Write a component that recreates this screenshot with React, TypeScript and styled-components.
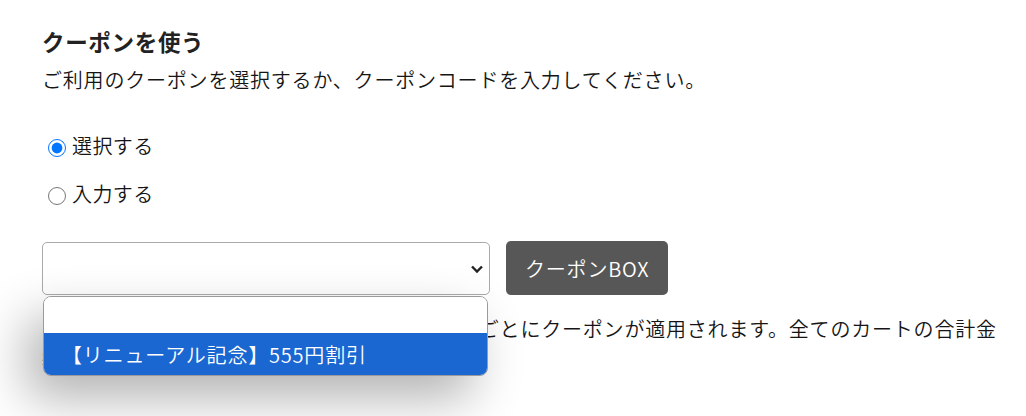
import React, { useState } from 'react';
import styled, { createGlobalStyle } from 'styled-components';

const GlobalStyle = createGlobalStyle`
  body {
    margin: 0;
    background: #fff;
    color: #151515;
    font-family: "Noto Sans CJK JP", "Noto Sans", sans-serif;
    font-weight: 350;
  }
`;

const Page = styled.div`
  padding: 24px 26px 0 42px;
  height: 416px;
  box-sizing: border-box;
  overflow: hidden;
`;

const Title = styled.h2`
  margin: 0;
  font-size: 22.5px;
  font-weight: 700;
  line-height: 34px;
  letter-spacing: 0.03em;
  color: #222;
`;

const Lead = styled.p`
  margin: 6px 0 0;
  font-size: 20px;
  line-height: 32px;
  letter-spacing: 0.04em;
`;

const RadioGroup = styled.div`
  display: flex;
  flex-direction: column;
  gap: 14px;
  margin: 33px 0 0 6px;
`;

const RadioLabel = styled.label`
  display: flex;
  align-items: center;
  font-size: 20px;
  line-height: 34px;
  letter-spacing: 0.02em;
  cursor: pointer;
`;

const Radio = styled.input`
  width: 18px;
  height: 18px;
  margin: 4px 6px 0 0;
  accent-color: #0075ff;
`;

const CouponRow = styled.div`
  display: flex;
  align-items: flex-start;
  gap: 16px;
  margin-top: 31px;
`;

const SelectWrap = styled.div`
  position: relative;
`;

const SelectBox = styled.div`
  width: 448px;
  height: 53px;
  box-sizing: border-box;
  border: 1px solid #aaa;
  border-radius: 5px;
  display: flex;
  align-items: center;
  justify-content: flex-end;
  padding-right: 5px;
  background: #fff;
`;

const Popup = styled.ul`
  position: absolute;
  top: 54px;
  left: 1px;
  width: 445px;
  margin: 0;
  padding: 0;
  list-style: none;
  box-sizing: border-box;
  border: 1px solid #9a9a9a;
  border-radius: 8px;
  overflow: hidden;
  background: #fff;
  box-shadow: -16px 22px 50px rgba(0, 0, 0, 0.3);
  z-index: 10;
`;

const Option = styled.li<{ $active?: boolean }>`
  height: ${(p) => (p.$active ? '42px' : '36px')};
  display: flex;
  align-items: center;
  padding-left: 18px;
  font-size: 20px;
  letter-spacing: 0.04em;
  color: ${(p) => (p.$active ? '#fff' : '#222')};
  background: ${(p) => (p.$active ? '#1a67d2' : '#fff')};
`;

const BoxButton = styled.button`
  height: 54px;
  margin-top: -1px;
  padding: 0 19px;
  border: none;
  border-radius: 5px;
  background: #575757;
  color: #fff;
  font-family: inherit;
  font-weight: 350;
  font-size: 20px;
  letter-spacing: 0.04em;
  cursor: pointer;
`;

const Note = styled.p`
  margin: 18px 0 0;
  font-size: 20px;
  line-height: 32px;
  letter-spacing: 0.04em;
`;

const Chevron = () => (
  <svg width="14" height="10" viewBox="0 0 14 10">
    <path d="M2 2.5 L7 7.5 L12 2.5" fill="none" stroke="#222" strokeWidth="2.4" />
  </svg>
);

const App = () => {
  const [mode, setMode] = useState('select');

  return (
    <Page>
      <GlobalStyle />
      <Title>クーポンを使う</Title>
      <Lead>ご利用のクーポンを選択するか、クーポンコードを入力してください。</Lead>
      <RadioGroup>
        <RadioLabel>
          <Radio type="radio" name="mode" checked={mode === 'select'} onChange={() => setMode('select')} />
          選択する
        </RadioLabel>
        <RadioLabel>
          <Radio type="radio" name="mode" checked={mode === 'input'} onChange={() => setMode('input')} />
          入力する
        </RadioLabel>
      </RadioGroup>
      <CouponRow>
        <SelectWrap>
          <SelectBox>
            <Chevron />
          </SelectBox>
          <Popup>
            <Option />
            <Option $active>【リニューアル記念】555円割引</Option>
          </Popup>
        </SelectWrap>
        <BoxButton>クーポンBOX</BoxButton>
      </CouponRow>
      <Note>
        ※ご注文時にカートが複数ある場合は、カートごとにクーポンが適用されます。全てのカートの合計金額には適用されません。
      </Note>
    </Page>
  );
};

export default App;
